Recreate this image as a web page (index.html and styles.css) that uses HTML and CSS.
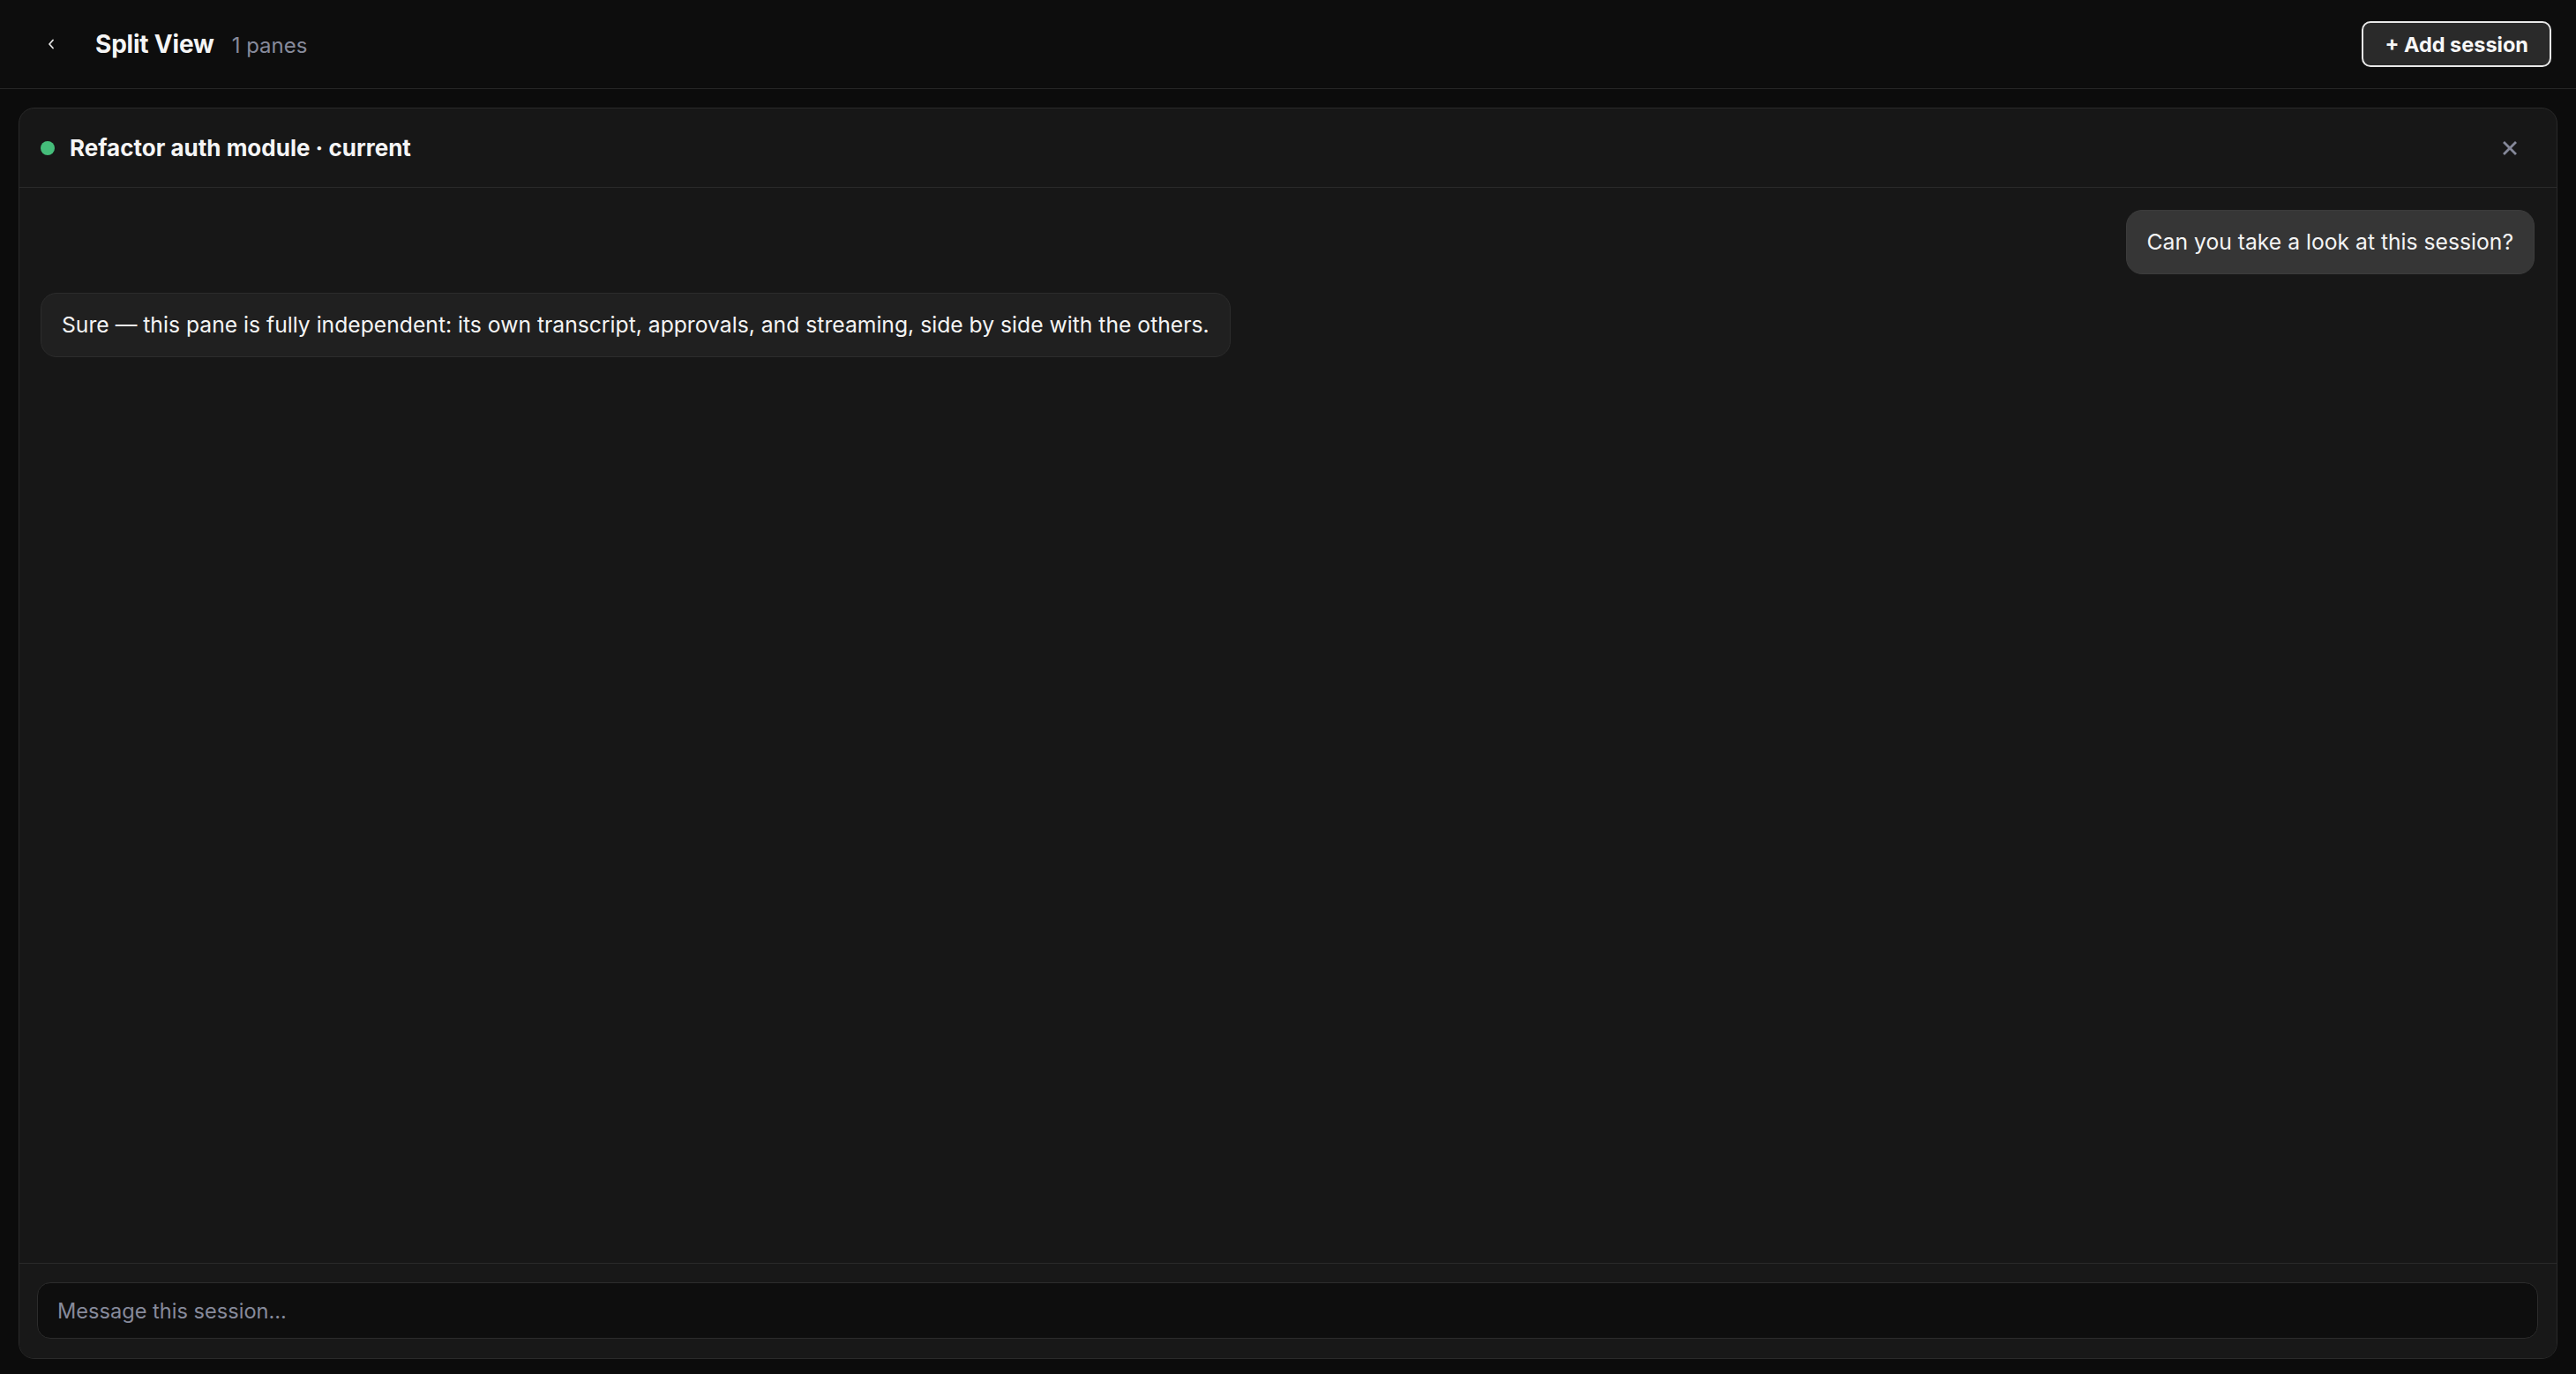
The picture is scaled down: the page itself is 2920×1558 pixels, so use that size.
FILE: index.html
```html
<!DOCTYPE html>
<html lang="en">
<head>
<meta charset="utf-8">
<title>Split View</title>
<link rel="stylesheet" href="styles.css">
</head>
<body>
  <header class="topbar">
    <button class="back-btn" type="button" aria-label="Back">
      <svg width="8" height="12" viewBox="0 0 8 12" fill="none">
        <path d="M6 1.5 L2 6 L6 10.5" stroke="#e6e6e6" stroke-width="1.8" stroke-linecap="round" stroke-linejoin="round"/>
      </svg>
    </button>
    <h1 class="title">Split View</h1>
    <span class="pane-count">1 panes</span>
    <button class="add-btn" type="button">+ Add session</button>
  </header>

  <main class="workspace">
    <section class="pane">
      <div class="pane-head">
        <span class="status-dot"></span>
        <span class="pane-title">Refactor auth module · current</span>
        <button class="close-btn" type="button" aria-label="Close pane">
          <svg width="16" height="16" viewBox="0 0 16 16">
            <path d="M2 2 L14 14 M14 2 L2 14" stroke="#858899" stroke-width="2.8" stroke-linecap="square"/>
          </svg>
        </button>
      </div>

      <div class="transcript">
        <div class="msg msg-user">Can you take a look at this session?</div>
        <div class="msg msg-assistant">Sure — this pane is fully independent: its own transcript, approvals, and streaming, side by side with the others.</div>
      </div>

      <div class="composer">
        <input class="composer-input" type="text" placeholder="Message this session...">
      </div>
    </section>
  </main>
</body>
</html>
```

FILE: styles.css
```css
* {
  box-sizing: border-box;
}

html, body {
  height: 100%;
}

body {
  margin: 0;
  background: #0c0c0c;
  color: #f2f2f2;
  font-family: Inter, "Noto Sans", "Liberation Sans", sans-serif;
  display: flex;
  flex-direction: column;
  overflow: hidden;
}

button {
  font-family: inherit;
  cursor: pointer;
}

/* ---- top bar ---- */
.topbar {
  height: 101px;
  flex: none;
  display: flex;
  align-items: center;
  padding: 0 28px 0 38px;
  border-bottom: 1px solid #262626;
  background: #0d0d0d;
}

.back-btn {
  width: 40px;
  height: 40px;
  display: flex;
  align-items: center;
  justify-content: center;
  background: none;
  border: none;
  padding: 0;
}

.title {
  margin: 0 0 0 30px;
  font-size: 28px;
  font-weight: 700;
  letter-spacing: -0.2px;
  color: #f5f5f5;
}

.pane-count {
  margin-left: 20px;
  font-size: 24px;
  color: #868a9b;
  margin-top: 2px;
}

.add-btn {
  margin-left: auto;
  height: 52px;
  padding: 0 24px;
  border: 2px solid #e8e8e8;
  border-radius: 10px;
  background: #2a2a2a;
  color: #f7f7f7;
  font-size: 23.5px;
  font-weight: 700;
}

/* ---- workspace ---- */
.workspace {
  flex: 1;
  min-height: 0;
  display: flex;
  padding: 21px 21px 17px;
}

.pane {
  flex: 1;
  display: flex;
  flex-direction: column;
  background: #171717;
  border: 1px solid #2a2a2a;
  border-radius: 18px;
  overflow: hidden;
}

.pane-head {
  height: 90px;
  flex: none;
  display: flex;
  align-items: center;
  padding: 0 33px 0 24px;
  border-bottom: 1px solid #2a2a2a;
}

.status-dot {
  width: 16px;
  height: 16px;
  border-radius: 50%;
  background: #45bd7a;
  flex: none;
}

.pane-title {
  margin-left: 17px;
  font-size: 26px;
  font-weight: 700;
  color: #f5f5f5;
}

.close-btn {
  margin-left: auto;
  width: 40px;
  height: 40px;
  display: flex;
  align-items: center;
  justify-content: center;
  background: none;
  border: none;
  padding: 0;
}

/* ---- transcript ---- */
.transcript {
  flex: 1;
  min-height: 0;
  display: flex;
  flex-direction: column;
  align-items: flex-start;
  gap: 21px;
  padding: 25px 25px 25px 24px;
  overflow-y: auto;
}

.msg {
  padding: 17px 23px;
  border-radius: 18px;
  font-size: 24.7px;
  line-height: 37px;
  color: #f4f4f4;
  border: 1px solid;
}

.msg-user {
  align-self: flex-end;
  background: #363636;
  border-color: #3c3c3c;
}

.msg-assistant {
  background: #202020;
  border-color: #2c2c2c;
}

/* ---- composer ---- */
.composer {
  flex: none;
  padding: 21px 21px 22px 20px;
  border-top: 1px solid #2a2a2a;
  background: #181818;
}

.composer-input {
  display: block;
  width: 100%;
  height: 64px;
  padding: 0 22px;
  background: #0e0e0e;
  border: 1px solid #2c2c2c;
  border-radius: 15px;
  font-family: inherit;
  font-size: 23.6px;
  color: #f2f2f2;
  outline: none;
}

.composer-input::placeholder {
  color: #868a9b;
}
```
